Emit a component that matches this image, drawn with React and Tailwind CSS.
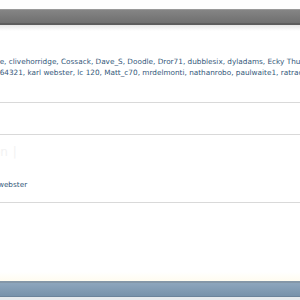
export default function App() {
  return (
    <div className="w-[300px] h-[300px] overflow-hidden bg-white flex flex-col font-['DejaVu_Sans',sans-serif]">
      <div className="h-[9px] bg-white" />
      {/* top bar */}
      <div className="h-[16px] border-t border-t-[#9a9a9a] border-b-2 border-b-[#5c5c5c] bg-gradient-to-b from-[#858585] to-[#6f6f6f]" />
      <div className="h-[6px] bg-gradient-to-b from-[#e6e6e6] to-white" />

      {/* who's online list */}
      <div className="pt-[25px] h-[72px] border-b border-[#d9d9d9] overflow-hidden">
        <p className="ml-[-5px] text-[7.3px] leading-[11px] text-[#34587a] whitespace-nowrap">
          ge, clivehorridge, Cossack, Dave_S, Doodle, Dror71, dubblesix, dyladams, Ecky Thump
        </p>
        <p className="ml-[-5px] text-[7.3px] leading-[11px] text-[#34587a] whitespace-nowrap">
          b64321, karl webster, lc 120, Matt_c70, mrdelmonti, nathanrobo, paulwaite1, ratrace
        </p>
      </div>

      <div className="h-[32px] border-b border-[#d9d9d9]" />

      <div className="h-[68px] border-b border-[#d9d9d9] overflow-hidden">
        <p className="mt-[9px] ml-[-7px] text-[12px] leading-[16px] text-[#f2f2f2] whitespace-nowrap">
          on <span className="ml-[1px]">|</span>
        </p>
        <p className="mt-[19px] ml-[-18px] text-[7.3px] leading-[11px] text-[#34587a] whitespace-nowrap">
          karl webster
        </p>
      </div>

      <div className="flex-1 bg-white" />
      {/* footer bar */}
      <div className="h-[9px] bg-gradient-to-b from-white to-[#fffcf0]" />
      <div className="h-[16px] border-t-2 border-t-[#8497a8] border-b border-b-[#6c849b] bg-gradient-to-b from-[#8da6bd] to-[#7792ab]" />
      <div className="h-[3px] bg-[#e6eaed]" />
    </div>
  );
}
